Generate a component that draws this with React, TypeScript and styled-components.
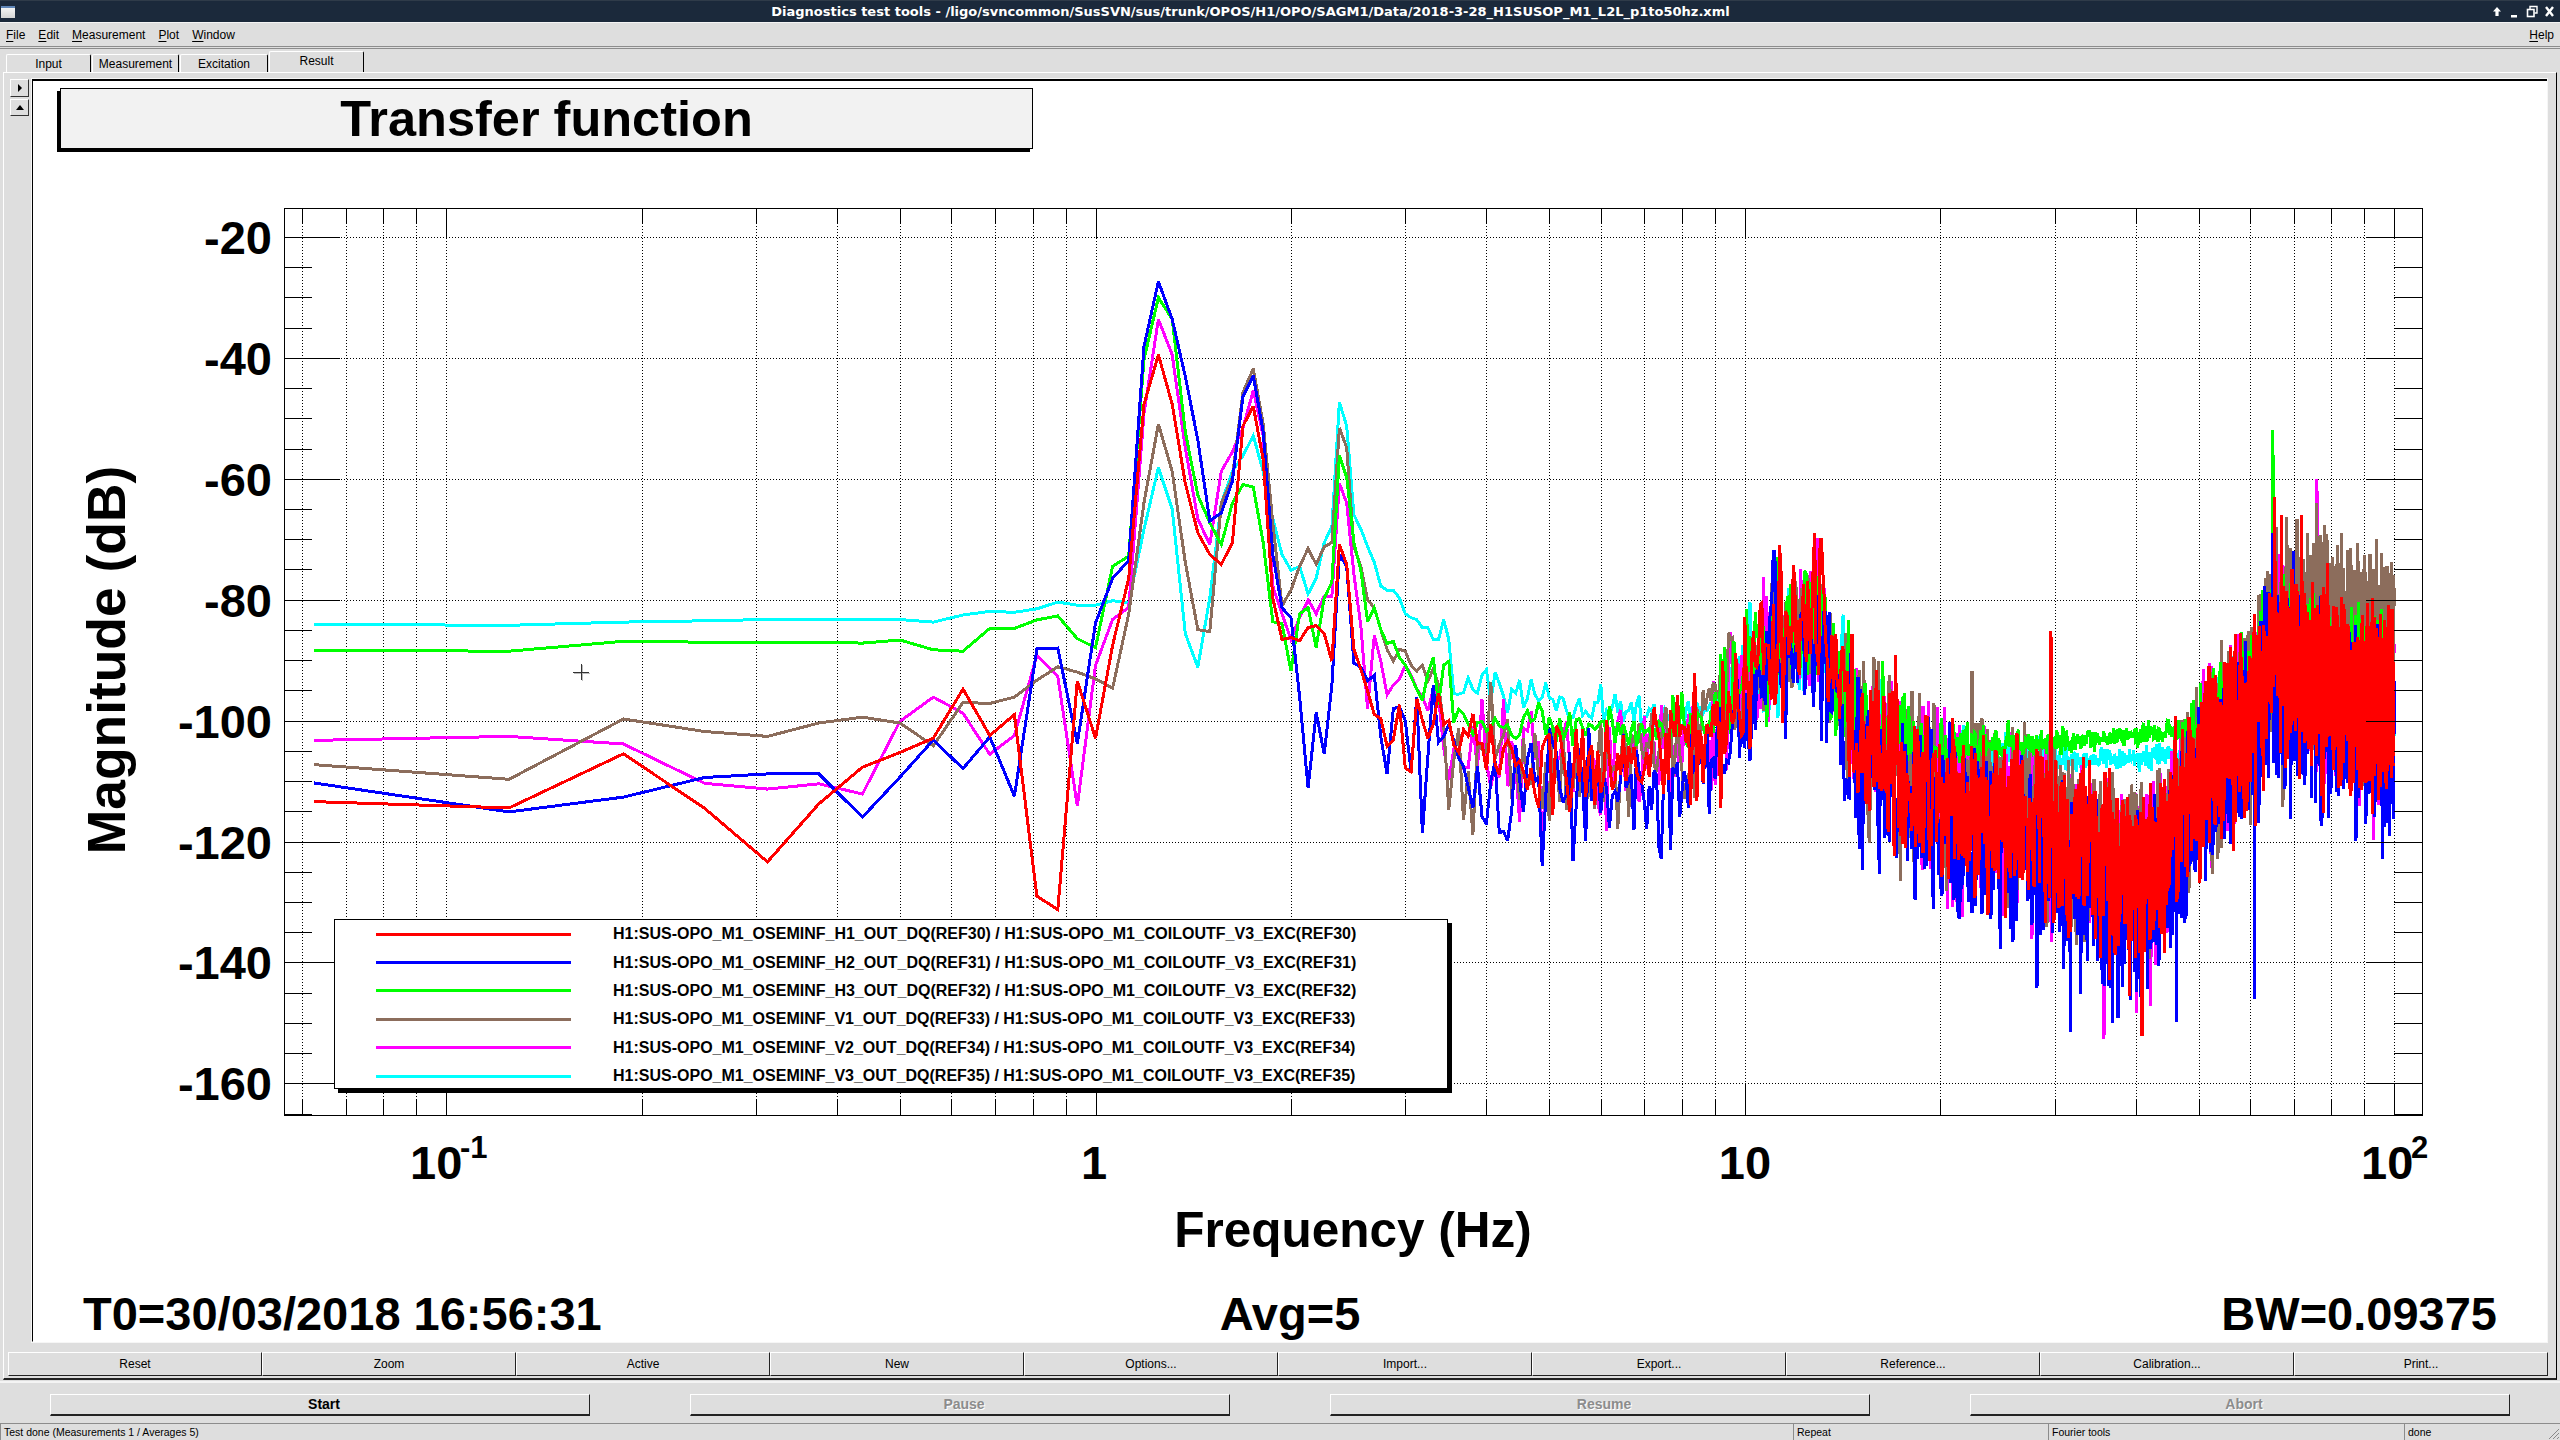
import React, { useMemo } from "react";
import styled, { createGlobalStyle } from "styled-components";

const GlobalStyle = createGlobalStyle`
  html, body {
    margin: 0;
    padding: 0;
    background: #dedede;
  }
  body {
    width: 2560px;
    height: 1440px;
    overflow: hidden;
    font-family: "Liberation Sans", Arial, sans-serif;
  }
`;

const Window = styled.div`
  width: 2560px;
  height: 1440px;
  display: flex;
  flex-direction: column;
  background: #dedede;
  color: #000;
  font-size: 12px;
`;

const TitleBar = styled.div`
  height: 21px;
  flex: none;
  display: flex;
  align-items: center;
  background: #1b293b;
  border-top: 1px solid #2f3b49;
`;

const WindowIcon = styled.div`
  width: 14px;
  height: 12px;
  margin: 1px 0 0 1px;
  flex: none;
  background: linear-gradient(#5f86b8 0 2px, #f4f4f4 2px, #d4d4d4);
`;

const TitleText = styled.div`
  flex: 1;
  text-align: center;
  color: #fff;
  font-family: "DejaVu Sans", sans-serif;
  font-weight: bold;
  font-size: 13px;
  white-space: nowrap;
`;

const WindowControls = styled.div`
  width: 74px;
  flex: none;
  height: 21px;
`;

const MenuBar = styled.div`
  height: 23px;
  flex: none;
  display: flex;
  align-items: center;
  gap: 13px;
  padding: 0 6px;
  border-top: 1px solid #f4f4f4;
  border-bottom: 1px solid #8c8c8c;
`;

const MenuItem = styled.span<{ $right?: boolean }>`
  margin-left: ${({ $right }) => ($right ? "auto" : "0")};
  u {
    text-underline-offset: 2px;
  }
`;

const TabStrip = styled.div`
  height: 23px;
  flex: none;
  margin-top: 1px;
  display: flex;
  align-items: flex-end;
  padding-left: 6px;
  border-top: 1px solid #8c8c8c;
`;

const Tab = styled.div<{ $width: number; $active?: boolean }>`
  width: ${({ $width }) => $width}px;
  height: ${({ $active }) => ($active ? 21 : 18)}px;
  box-sizing: border-box;
  margin-right: 1px;
  padding-bottom: ${({ $active }) => ($active ? 3 : 0)}px;
  display: flex;
  align-items: center;
  justify-content: center;
  border-top: 1px solid #fff;
  border-left: 1px solid #fff;
  border-right: 1px solid #000;
  border-radius: 2px 2px 0 0;
`;

const TabFrame = styled.div`
  flex: 1;
  min-height: 0;
  margin: 0 3px;
  display: flex;
  flex-direction: column;
  border-top: 1px solid #fff;
  border-left: 1px solid #fff;
  border-right: 1px solid #000;
  border-bottom: 2px solid #222;
`;

const PaneRow = styled.div`
  flex: 1;
  min-height: 0;
  display: flex;
  padding-top: 6px;
`;

const SideColumn = styled.div`
  width: 28px;
  flex: none;
  padding-left: 6px;
  box-sizing: border-box;
  display: flex;
  flex-direction: column;
  gap: 2px;
`;

const NudgeButton = styled.div<{ $height: number }>`
  width: 19px;
  height: ${({ $height }) => $height}px;
  box-sizing: border-box;
  display: flex;
  align-items: center;
  justify-content: center;
  border-top: 1px solid #fff;
  border-left: 1px solid #fff;
  border-right: 1px solid #333;
  border-bottom: 1px solid #333;
`;

const Canvas = styled.div`
  width: 2515px;
  height: 1263px;
  flex: none;
  box-sizing: border-box;
  display: flex;
  flex-direction: column;
  background: #fff;
  border-top: 2px solid #000;
  border-left: 1px solid #000;
  border-bottom: 1px solid #fff;
  outline: 1px solid #f6f6f6;
  outline-offset: 0;
`;

const TitlePave = styled.div`
  width: 973px;
  height: 61px;
  flex: none;
  margin: 7px 0 2px 27px;
  box-sizing: border-box;
  display: flex;
  align-items: center;
  justify-content: center;
  background: #f2f2f2;
  border: 1px solid #000;
  box-shadow: -3px 3px 0 #000;
  font-size: 50.5px;
  font-weight: bold;
`;

const ChartArea = styled.div`
  position: relative;
  height: 1135px;
  margin-top: 4px;
  flex: none;
`;

const ChartSvg = styled.svg`
  display: block;
`;

const Legend = styled.div`
  position: absolute;
  left: 301px;
  top: 764px;
  width: 1114px;
  height: 170px;
  box-sizing: border-box;
  background: #fff;
  border: 1px solid #000;
  box-shadow: 4px 4px 0 #000;
  display: grid;
  grid-auto-rows: 28.4px;
`;

const LegendRow = styled.div`
  display: flex;
  align-items: center;
`;

const LegendKey = styled.div<{ $color: string }>`
  width: 195px;
  height: 3px;
  margin: 0 42px 0 41px;
  flex: none;
  background: ${({ $color }) => $color};
`;

const LegendLabel = styled.span`
  font-size: 16px;
  font-weight: bold;
  white-space: nowrap;
`;

const InfoRow = styled.div`
  height: 48px;
  flex: none;
  display: grid;
  grid-template-columns: 1fr auto 1fr;
  padding: 0 50px 0 50px;
  font-size: 47px;
  line-height: 48px;
  font-weight: bold;
  div:last-child {
    text-align: right;
  }
`;

const ToolRow = styled.div`
  height: 24px;
  flex: none;
  margin: 12px 8px 2px 4px;
  display: grid;
  grid-template-columns: repeat(10, 1fr);
`;

const ToolButton = styled.div`
  box-sizing: border-box;
  display: flex;
  align-items: center;
  justify-content: center;
  border-top: 1px solid #fff;
  border-left: 1px solid #fff;
  border-right: 1px solid #222;
  border-bottom: 1px solid #222;
`;

const ActionRow = styled.div`
  height: 42px;
  flex: none;
  box-sizing: border-box;
  padding: 11px 0 0 50px;
  display: grid;
  grid-template-columns: repeat(4, 540px);
  grid-template-rows: 22px;
  column-gap: 100px;
  border-top: 2px solid #f4f4f4;
  margin-top: 1px;
`;

const ActionButton = styled.div<{ $disabled?: boolean }>`
  box-sizing: border-box;
  padding: 0 0 2px 8px;
  display: flex;
  align-items: center;
  justify-content: center;
  font-size: 14px;
  font-weight: bold;
  color: ${({ $disabled }) => ($disabled ? "#8c8c8c" : "#000")};
  text-shadow: ${({ $disabled }) => ($disabled ? "1px 1px 0 #fff" : "none")};
  border-top: 1px solid #fff;
  border-left: 1px solid #fff;
  border-right: 1px solid #222;
  border-bottom: 2px solid #222;
`;

const StatusBar = styled.div`
  height: 17px;
  flex: none;
  display: grid;
  grid-template-columns: 1793px 255px 356px 156px;
  position: relative;
  font-size: 10.5px;
`;

const StatusCell = styled.div`
  box-sizing: border-box;
  padding: 2px 0 0 3px;
  border-top: 1px solid #8c8c8c;
  border-left: 1px solid #8c8c8c;
  white-space: nowrap;
`;

const ResizeGrip = styled.svg`
  position: absolute;
  right: 0;
  bottom: 0;
`;

const AxisText = styled.text<{ $size: number }>`
  font-family: "Liberation Sans", Arial, sans-serif;
  font-weight: bold;
  font-size: ${({ $size }) => $size}px;
  fill: #000;
`;

// plot frame, in page pixels
const PLOT = { left: 284, right: 2422, top: 208, bottom: 1115 };
const CHART_TOP = 155;
const CHART_LEFT = 33;

const xOf = (f: number) => 1095.5 + 649.3 * Math.log10(f);
const yOf = (db: number) => 237 - (db + 20) * 6.045;

// y of the first sweep points as read off the plot (k = 1..19, 0.0625 Hz apart)
const toLowY = (z: number) => 190 + z / 2.24;
// same for k = 20..56
const toMidY = (z: number) => 250 + z / 2.529;

type Curve = {
  name: string;
  color: string;
  seed: number;
  offset: number;
  low: number[];
  mid: number[];
  floor?: [number, number][];
  spikes: [number, number][];
};

const curves: Record<string, Curve> = {
  red: {
    name: "H1",
    color: "#ff0000",
    seed: 3071,
    offset: 1,
    low: [1370, 1384, 1263, 1385, 1505, 1375, 1293, 1260, 1228, 1118, 1222, 1175, 1582, 1612, 1100, 1228, 1020, 870, 480],
    mid: [265, 390, 590, 715, 770, 795, 740, 445, 395, 530, 880, 985, 980, 988, 955, 950, 970, 1040, 745, 795, 1010, 1060, 1115, 1175, 1185, 1255, 1240, 1150, 1310, 1320, 1135, 1190, 1235, 1200, 1120, 1200, 1190],
    spikes: [[11.3, -71], [12.8, -69], [13.1, -70], [29.6, -85.5], [40.9, -152], [65.5, -63], [67, -66], [72, -66], [79, -74]],
  },
  blue: {
    name: "H2",
    color: "#0000ff",
    seed: 1187,
    offset: -3,
    low: [1328, 1393, 1360, 1316, 1308, 1308, 1405, 1315, 1232, 1296, 1225, 1358, 1028, 1026, 1240, 970, 870, 830, 350],
    mid: [80, 175, 320, 480, 685, 665, 585, 370, 318, 460, 770, 905, 930, 1130, 1360, 1170, 1275, 1100, 770, 800, 1045, 1055, 1090, 1075, 1230, 1325, 1160, 1155, 1190, 1320, 1130, 1475, 1280, 1100, 1245, 1230, 1200],
    spikes: [[11.1, -72], [36.8, -150], [37.6, -149], [61, -146], [65, -69], [70, -72]],
  },
  green: {
    name: "H3",
    color: "#00ff00",
    seed: 9021,
    offset: 0,
    low: [1031, 1033, 1011, 1013, 1013, 1013, 1015, 1008, 1030, 1033, 982, 982, 963, 954, 1005, 1025, 843, 820, 380],
    mid: [120, 175, 460, 620, 690, 745, 640, 593, 600, 740, 940, 945, 1065, 920, 905, 1005, 880, 840, 520, 575, 740, 810, 940, 905, 960, 995, 990, 1030, 1050, 1080, 1110, 1140, 1070, 1030, 1150, 1050, 1040],
    floor: [[3.5, -100], [5, -103], [10, -104], [20, -106], [30, -103.5], [45, -102], [60, -102], [100, -102]],
    spikes: [[11.2, -73], [65, -52], [65.2, -56]],
  },
  brown: {
    name: "V1",
    color: "#8c6d5c",
    seed: 4451,
    offset: 2,
    low: [1287, 1320, 1185, 1213, 1224, 1194, 1181, 1194, 1245, 1148, 1150, 1136, 1098, 1068, 1080, 1095, 1116, 950, 700],
    mid: [440, 560, 790, 960, 965, 640, 575, 360, 300, 440, 690, 900, 860, 800, 755, 795, 750, 740, 450, 500, 750, 800, 885, 905, 960, 1010, 1040, 1010, 1015, 1050, 1065, 1050, 1090, 1060, 1100, 1200, 1415],
    spikes: [[22.4, -92], [65.8, -68], [76, -64], [90, -74]],
  },
  magenta: {
    name: "V2",
    color: "#ff00ff",
    seed: 6277,
    offset: 1,
    low: [1233, 1224, 1241, 1329, 1342, 1330, 1353, 1190, 1136, 1172, 1264, 1222, 1042, 1090, 1380, 1065, 962, 935, 500],
    mid: [175, 265, 500, 680, 745, 560, 510, 450, 355, 470, 850, 920, 985, 930, 885, 920, 875, 875, 590, 640, 820, 950, 1160, 975, 1040, 1125, 1100, 1085, 1050, 1075, 1110, 1130, 1165, 1110, 1130, 1260, 1340],
    spikes: [[12.9, -70], [76, -60], [76.2, -62], [85, -72]],
  },
  cyan: {
    name: "V3",
    color: "#00ffff",
    seed: 7703,
    offset: -1,
    low: [973, 975, 968, 965, 962, 962, 962, 962, 968, 952, 944, 946, 938, 923, 930, 930, 920, 925, 760],
    mid: [550, 655, 970, 1055, 880, 640, 560, 520, 470, 560, 680, 770, 810, 800, 870, 830, 740, 700, 385, 445, 670, 705, 750, 790, 850, 860, 860, 880, 920, 930, 935, 955, 955, 985, 985, 935, 985],
    floor: [[3.5, -93], [4, -95], [5, -97], [7, -100], [10, -100], [15, -103], [20, -106], [30, -107], [45, -106], [60, -104], [100, -104]],
    spikes: [],
  },
};

const legendOrder = ["red", "blue", "green", "brown", "magenta", "cyan"];
const refNumber: Record<string, number> = { red: 30, blue: 31, green: 32, brown: 33, magenta: 34, cyan: 35 };
// red ends up on top in the reference
const drawOrder = ["cyan", "magenta", "brown", "green", "blue", "red"];

const signalLevel: [number, number][] = [
  [3.5, -105], [5, -106], [7, -106], [9, -101], [10, -93], [11, -87], [12, -83], [13, -84],
  [14, -92], [15, -103], [17, -107], [20, -113], [25, -115], [30, -119], [40, -126], [45, -120],
  [50, -108], [60, -98], [65, -88], [70, -90], [80, -93], [90, -96], [100, -97],
];

const lookup = (table: [number, number][], f: number) => {
  if (f <= table[0][0]) return table[0][1];
  for (let i = 1; i < table.length; i++) {
    if (f <= table[i][0]) {
      const [f0, v0] = table[i - 1];
      const [f1, v1] = table[i];
      const t = Math.log(f / f0) / Math.log(f1 / f0);
      return v0 + (v1 - v0) * t;
    }
  }
  return table[table.length - 1][1];
};

const makeRandom = (seed: number) => {
  let s = seed;
  return () => {
    s = (s + 0x6d2b79f5) | 0;
    let t = Math.imul(s ^ (s >>> 15), 1 | s);
    t = (t + Math.imul(t ^ (t >>> 7), 61 | t)) ^ t;
    return ((t ^ (t >>> 14)) >>> 0) / 4294967296;
  };
};

const gauss = (rand: () => number) =>
  Math.sqrt(-2 * Math.log(rand() + 1e-9)) * Math.cos(2 * Math.PI * rand());

const buildPoints = (curve: Curve) => {
  const rand = makeRandom(curve.seed);
  const out: string[] = [];
  for (let k = 1; k <= 1600; k++) {
    const f = k * 0.0625;
    const x = xOf(f);
    let y: number;
    if (k <= 19) {
      y = toLowY(curve.low[k - 1]);
    } else if (k <= 56) {
      y = toMidY(curve.mid[k - 20]);
    } else {
      const a = gauss(rand);
      const b = gauss(rand);
      const noise = 10 * Math.log10((a * a + b * b) / 2 + 1e-3);
      const extra = curve.name === "V1" && f > 68 ? 8 : 0;
      // a flat spread above 14 Hz, where the traces fill a solid band
      const spread = f < 9 ? gauss(rand) * 2.5 : (rand() - 0.5) * (f < 14 ? 16 : 24);
      let db = lookup(signalLevel, f) + curve.offset + extra + noise * (f < 9 ? 0.8 : 0.7) + spread;
      db = Math.max(-154, Math.min(f < 20 ? -70 : -62, db));
      if (curve.floor) {
        const jitter = gauss(rand) * (f < 10 ? 1.8 : 0.9);
        const level = lookup(curve.floor, f) + jitter;
        db = 10 * Math.log10(Math.pow(10, db / 10) + Math.pow(10, level / 10));
      }
      for (const [sf, sdb] of curve.spikes) {
        if (Math.abs(sf - f) < 0.04) db = sdb;
      }
      y = yOf(db);
    }
    out.push(`${x.toFixed(1)},${y.toFixed(1)}`);
  }
  return out.join(" ");
};

const xTicks = (() => {
  const ticks: { x: number; decade: boolean }[] = [];
  for (const d of [0.01, 0.1, 1, 10, 100]) {
    for (let m = 1; m <= 9; m++) {
      const x = Math.round(xOf(d * m)) + 0.5;
      if (x > PLOT.left + 2 && x < PLOT.right - 2) ticks.push({ x, decade: m === 1 });
    }
  }
  return ticks;
})();

const yTicks = (() => {
  const ticks: { y: number; major: boolean; db: number }[] = [];
  for (let db = -20; db >= -165; db -= 5) {
    ticks.push({ y: Math.round(yOf(db)) + 0.5, major: db % 20 === 0, db });
  }
  return ticks;
})();

const Chart: React.FC = () => {
  const lines = useMemo(
    () => drawOrder.map((id) => ({ id, color: curves[id].color, points: buildPoints(curves[id]) })),
    []
  );
  return (
    <ChartSvg width={2514} height={1135} viewBox={`${CHART_LEFT} ${CHART_TOP} 2514 1135`}>
      <g stroke="#000" strokeWidth={1} strokeDasharray="1 2" shapeRendering="crispEdges">
        {xTicks.map((t) => (
          <line key={t.x} x1={t.x} x2={t.x} y1={PLOT.top} y2={PLOT.bottom} />
        ))}
        {yTicks
          .filter((t) => t.major)
          .map((t) => (
            <line key={t.db} x1={PLOT.left} x2={PLOT.right} y1={t.y} y2={t.y} />
          ))}
      </g>
      <g fill="none" strokeWidth={3} strokeLinejoin="miter" strokeMiterlimit={3} shapeRendering="crispEdges">
        {lines.map((l) => (
          <polyline key={l.id} stroke={l.color} points={l.points} />
        ))}
      </g>
      <g stroke="#000" strokeWidth={1} shapeRendering="crispEdges">
        {xTicks.map((t) => {
          const len = t.decade ? 31 : 16;
          return (
            <g key={t.x}>
              <line x1={t.x} x2={t.x} y1={PLOT.top} y2={PLOT.top + len} />
              <line x1={t.x} x2={t.x} y1={PLOT.bottom} y2={PLOT.bottom - len} />
            </g>
          );
        })}
        {yTicks.map((t) => {
          const len = t.major ? 56 : 28;
          return (
            <g key={t.db}>
              <line x1={PLOT.left} x2={PLOT.left + len} y1={t.y} y2={t.y} />
              <line x1={PLOT.right} x2={PLOT.right - len} y1={t.y} y2={t.y} />
            </g>
          );
        })}
        <rect
          x={PLOT.left + 0.5}
          y={PLOT.top + 0.5}
          width={PLOT.right - PLOT.left}
          height={PLOT.bottom - PLOT.top}
          fill="none"
          strokeWidth={1.2}
        />
      </g>
      {yTicks
        .filter((t) => t.major)
        .map((t) => (
          <AxisText key={t.db} $size={47} x={272} y={t.y + 16} textAnchor="end">
            {t.db}
          </AxisText>
        ))}
      <AxisText $size={47} x={410} y={1179}>10</AxisText>
      <AxisText $size={31} x={460} y={1158}>-1</AxisText>
      <AxisText $size={47} x={1094} y={1179} textAnchor="middle">1</AxisText>
      <AxisText $size={47} x={1745} y={1179} textAnchor="middle">10</AxisText>
      <AxisText $size={47} x={2361} y={1179}>10</AxisText>
      <AxisText $size={31} x={2411} y={1158}>2</AxisText>
      <AxisText $size={49.5} x={1353} y={1247} textAnchor="middle">Frequency (Hz)</AxisText>
      <AxisText $size={53.4} textAnchor="middle" transform="translate(125 660) rotate(-90)">
        Magnitude (dB)
      </AxisText>
      <g strokeWidth={1} shapeRendering="crispEdges">
        <g stroke="#bbb">
          <line x1={574} x2={590} y1={673.5} y2={673.5} />
          <line x1={582.5} x2={582.5} y1={665} y2={681} />
        </g>
        <g stroke="#333">
          <line x1={573} x2={589} y1={672.5} y2={672.5} />
          <line x1={581.5} x2={581.5} y1={664} y2={680} />
        </g>
      </g>
    </ChartSvg>
  );
};

const RowsLegend: React.FC = () => (
  <Legend>
    {legendOrder.map((id) => {
      const c = curves[id];
      const ref = refNumber[id];
      return (
        <LegendRow key={id}>
          <LegendKey $color={c.color} />
          <LegendLabel>
            {`H1:SUS-OPO_M1_OSEMINF_${c.name}_OUT_DQ(REF${ref}) / H1:SUS-OPO_M1_COILOUTF_V3_EXC(REF${ref})`}
          </LegendLabel>
        </LegendRow>
      );
    })}
  </Legend>
);

const ControlsIcon: React.FC = () => (
  <svg width={74} height={21} viewBox="0 0 74 21">
    <path d="M11 6 L15 10.5 L12.6 10.5 L12.6 15 L9.4 15 L9.4 10.5 L7 10.5 Z" fill="#fff" />
    <rect x={25} y={14} width={6} height={2.5} fill="#fff" />
    <path d="M44 8 V5.5 H51 V12 H48.5" fill="none" stroke="#fff" strokeWidth={1.4} />
    <rect x={41.5} y={8.5} width={6.5} height={7} fill="none" stroke="#fff" strokeWidth={1.6} />
    <path d="M60 6 L67 15 M67 6 L60 15" stroke="#fff" strokeWidth={2.4} />
  </svg>
);

const toolLabels = ["Reset", "Zoom", "Active", "New", "Options...", "Import...", "Export...", "Reference...", "Calibration...", "Print..."];
const actions = [
  { label: "Start", disabled: false },
  { label: "Pause", disabled: true },
  { label: "Resume", disabled: true },
  { label: "Abort", disabled: true },
];
const tabs = [
  { label: "Input", width: 85 },
  { label: "Measurement", width: 87 },
  { label: "Excitation", width: 88 },
  { label: "Result", width: 95, active: true },
];

const App: React.FC = () => (
  <Window>
    <GlobalStyle />
    <TitleBar>
      <WindowIcon />
      <TitleText>
        Diagnostics test tools - /ligo/svncommon/SusSVN/sus/trunk/OPOS/H1/OPO/SAGM1/Data/2018-3-28_H1SUSOP_M1_L2L_p1to50hz.xml
      </TitleText>
      <WindowControls>
        <ControlsIcon />
      </WindowControls>
    </TitleBar>
    <MenuBar>
      <MenuItem><u>F</u>ile</MenuItem>
      <MenuItem><u>E</u>dit</MenuItem>
      <MenuItem><u>M</u>easurement</MenuItem>
      <MenuItem><u>P</u>lot</MenuItem>
      <MenuItem><u>W</u>indow</MenuItem>
      <MenuItem $right><u>H</u>elp</MenuItem>
    </MenuBar>
    <TabStrip>
      {tabs.map((t) => (
        <Tab key={t.label} $width={t.width} $active={t.active}>{t.label}</Tab>
      ))}
    </TabStrip>
    <TabFrame>
      <PaneRow>
        <SideColumn>
          <NudgeButton $height={18}>
            <svg width={6} height={8} viewBox="0 0 6 8"><path d="M1 0 L5 4 L1 8 Z" fill="#000" /></svg>
          </NudgeButton>
          <NudgeButton $height={17}>
            <svg width={8} height={5} viewBox="0 0 8 5"><path d="M0 5 L4 0 L8 5 Z" fill="#000" /></svg>
          </NudgeButton>
        </SideColumn>
        <Canvas>
          <TitlePave>Transfer function</TitlePave>
          <ChartArea>
            <Chart />
            <RowsLegend />
          </ChartArea>
          <InfoRow>
            <div>T0=30/03/2018 16:56:31</div>
            <div>Avg=5</div>
            <div>BW=0.09375</div>
          </InfoRow>
        </Canvas>
      </PaneRow>
      <ToolRow>
        {toolLabels.map((label) => (
          <ToolButton key={label}>{label}</ToolButton>
        ))}
      </ToolRow>
    </TabFrame>
    <ActionRow>
      {actions.map((a) => (
        <ActionButton key={a.label} $disabled={a.disabled}>{a.label}</ActionButton>
      ))}
    </ActionRow>
    <StatusBar>
      <StatusCell>Test done (Measurements 1 / Averages 5)</StatusCell>
      <StatusCell>Repeat</StatusCell>
      <StatusCell>Fourier tools</StatusCell>
      <StatusCell>done</StatusCell>
      <ResizeGrip width={14} height={14} viewBox="0 0 14 14">
        <path d="M13 3 L3 13 M13 7 L7 13 M13 11 L11 13" stroke="#888" strokeWidth={1} />
      </ResizeGrip>
    </StatusBar>
  </Window>
);

export default App;
